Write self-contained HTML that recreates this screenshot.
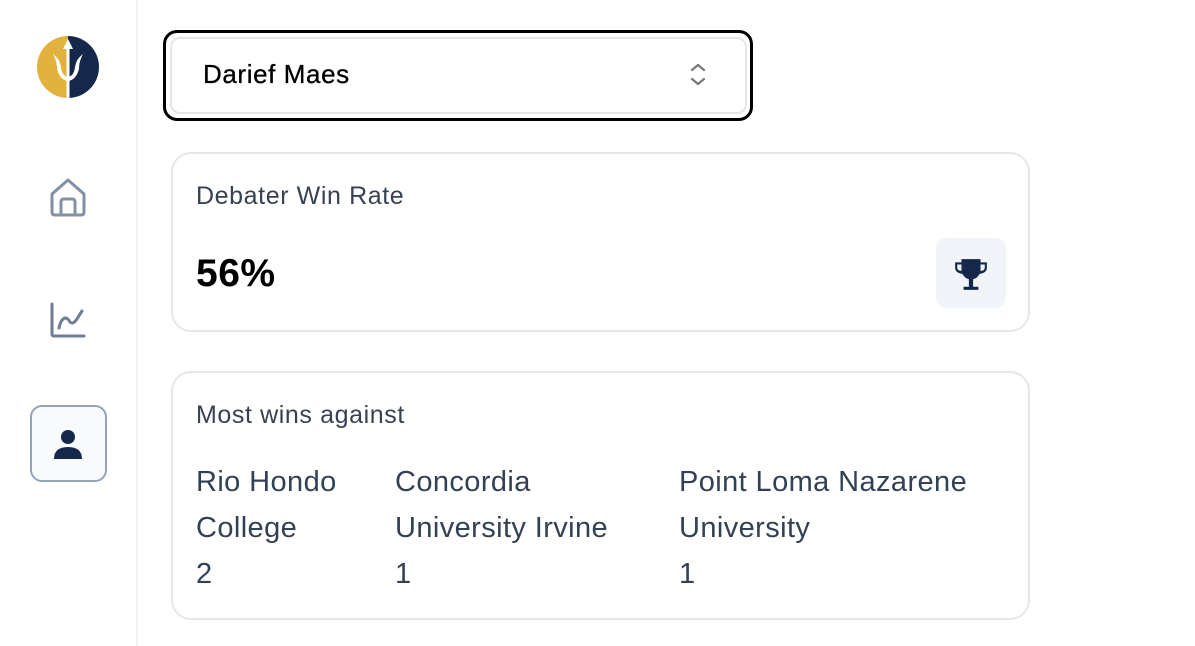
<!DOCTYPE html>
<html><head><style>
*{margin:0;padding:0;box-sizing:border-box}
body{width:1195px;height:646px;background:#fff;font-family:"Liberation Sans",sans-serif;position:relative;overflow:hidden}
.side{position:absolute;left:0;top:0;width:138px;height:646px;background:#fff;border-right:2px solid #f1f3f6}
.abs{position:absolute}
.card{position:absolute;left:171px;width:859px;border:2px solid #e5e7eb;border-radius:20px;background:#fff}
.lbl{position:absolute;left:23px;font-size:25px;letter-spacing:0.6px;color:#374151}
.col{position:absolute;top:86px;font-size:29px;letter-spacing:0.4px;line-height:46px;color:#334155}
</style></head><body>
<div class="side">
<svg class="abs" style="left:37px;top:36px" width="62" height="62" viewBox="0 0 62 62">
<path d="M31 0A31 31 0 0 0 31 62Z" fill="#e3b13e"/><path d="M31 0A31 31 0 0 1 31 62Z" fill="#15284b"/>
<path d="M31 3L26 13H29.5V40H32.5V13H36Z" fill="#fff"/>
<path d="M29.5 40V62H32.5V40Z" fill="#fff"/>
<path d="M16 18Q20 25 20 33Q23 44 31 45Q39 44 42 33Q42 25 46 18Q39 23 38 31Q37 40 31 41Q25 40 24 31Q23 23 16 18Z" fill="#fff"/>
</svg>
<svg class="abs" style="left:49px;top:177px" width="38" height="40" viewBox="0 0 38 40" fill="none" stroke="#8290a6" stroke-width="3" stroke-linejoin="round">
<path d="M3 17L19 3L35 17V35Q35 38 32 38H6Q3 38 3 35Z"/><path d="M12 38V25Q12 22 15 22H23Q26 22 26 25V38"/>
</svg>
<svg class="abs" style="left:49px;top:301px" width="38" height="38" viewBox="0 0 38 38" fill="none" stroke="#6f7d95" stroke-width="3" stroke-linecap="round" stroke-linejoin="round">
<path d="M3 3V33Q3 35 5 35H35"/><path d="M10 27Q12 18 16 17Q19 17 21 21Q24 24 28 18Q31 13 33 10"/>
</svg>
<div class="abs" style="left:30px;top:405px;width:77px;height:77px;border:2px solid #94a3b8;border-radius:12px;background:#f8fafc"></div>
<svg class="abs" style="left:53px;top:428px" width="30" height="32" viewBox="0 0 30 32" fill="#15284b">
<circle cx="15" cy="9" r="7"/><path d="M1 31Q1 19 15 19Q29 19 29 31Z"/>
</svg>
</div>

<div class="abs" style="left:163px;top:30px;width:590px;height:91px;border:3px solid #000;border-radius:14px"></div>
<div class="abs" style="left:170px;top:37px;width:577px;height:77px;border:2px solid #e5e5e5;border-radius:10px"></div>
<div class="abs" style="left:203px;top:59px;font-size:26px;letter-spacing:0.6px;color:#000;-webkit-text-stroke:0.3px #000">Darief Maes</div>
<svg class="abs" style="left:688px;top:62px" width="20" height="26" viewBox="0 0 20 26" fill="none" stroke="#777" stroke-width="2.2" stroke-linecap="round" stroke-linejoin="round">
<path d="M4 8L10 3L16 8"/><path d="M4 17L10 22L16 17"/>
</svg>

<div class="card" style="top:152px;height:180px">
<div class="lbl" style="top:28px">Debater Win Rate</div>
<div class="abs" style="left:23px;top:98px;font-size:39px;letter-spacing:0.5px;font-weight:bold;color:#000">56%</div>
<div class="abs" style="left:763px;top:84px;width:70px;height:70px;background:#f1f5f9;border-radius:10px"></div>
<svg class="abs" style="left:780px;top:102px" width="36" height="36" viewBox="0 0 34 34" fill="#15284b">
<path d="M8 3H26V6H32V11Q32 16 25 17Q23 21 19 22V29H24V32H10V29H15V22Q11 21 9 17Q2 16 2 11V6H8ZM4 8V11Q4 14 8 14V8ZM30 8H26V14Q30 14 30 11Z"/>
</svg>
</div>

<div class="card" style="top:371px;height:249px">
<div class="lbl" style="top:28px">Most wins against</div>
<div class="col" style="left:23px">Rio Hondo<br>College<br>2</div>
<div class="col" style="left:222px">Concordia<br>University Irvine<br>1</div>
<div class="col" style="left:506px">Point Loma Nazarene<br>University<br>1</div>
</div>
</body></html>
